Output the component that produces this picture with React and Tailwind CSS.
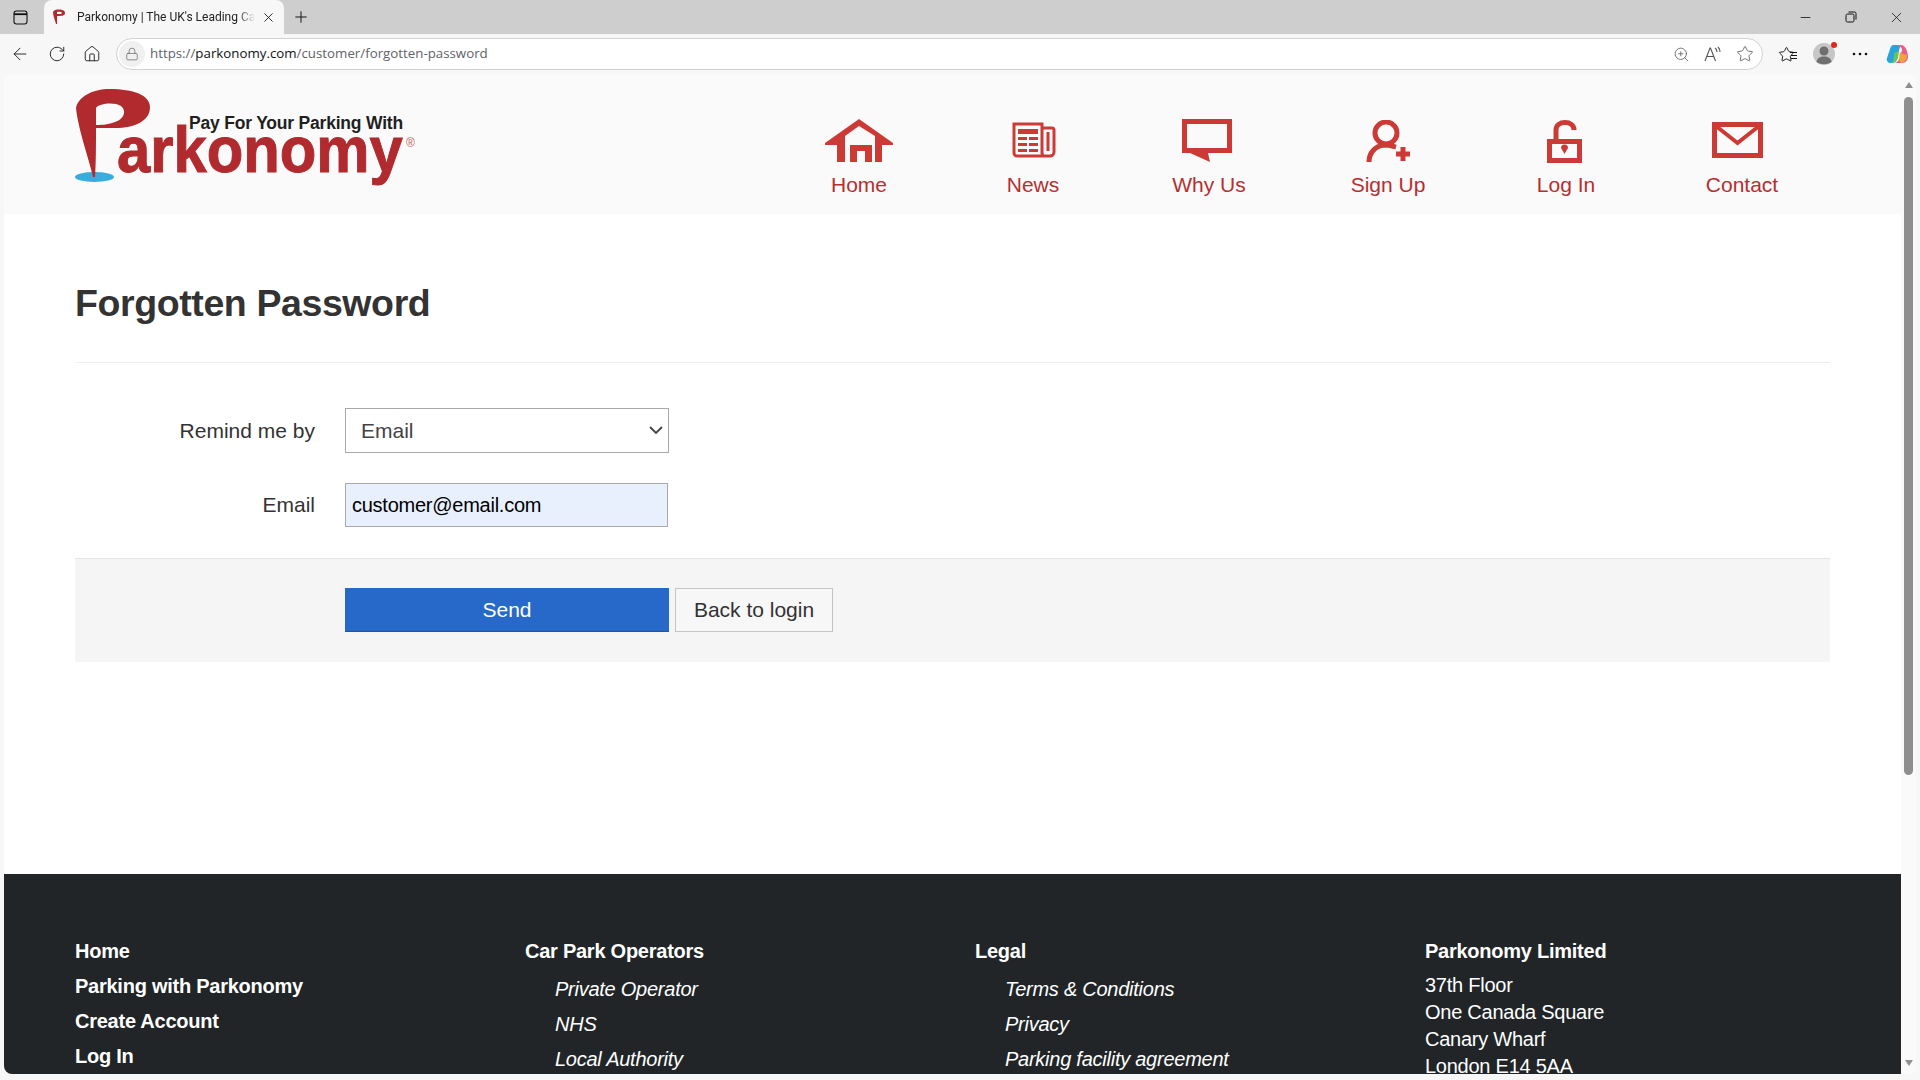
import React from "react";
import { ArrowLeft, RotateCw, House, Lock, ZoomIn, Star, X, Plus, Minus } from "lucide-react";

const nav = [
  { label: "Home", w: "w-[174px]", shift: "", Icon: HomeIcon },
  { label: "News", w: "w-[174px]", shift: "pl-[2px] pb-[2px]", Icon: NewsIcon },
  { label: "Why Us", w: "w-[178px]", shift: "pr-[5px]", Icon: ChatIcon },
  { label: "Sign Up", w: "w-[180px]", shift: "", Icon: SignUpIcon },
  { label: "Log In", w: "w-[176px]", shift: "pr-[4px]", Icon: LockIcon },
  { label: "Contact", w: "w-[176px]", shift: "pr-[9px] pb-[2px]", Icon: MailIcon },
];

function HomeIcon() {
  return (
    <svg width="68" height="44" viewBox="0 0 68 44" fill="#cc3a36" fillRule="evenodd">
      <path d="M34 0L68 24V26H57V43H12V26H0V24ZM34 7L20 17V43H25V26H47V43H50V17ZM32 32H40V43H32Z" />
    </svg>
  );
}

function NewsIcon() {
  return (
    <svg width="44" height="36" viewBox="0 0 44 36" fill="none" stroke="#cc3a36" strokeWidth="3">
      <path d="M2 2H30V31a3 3 0 0 0 3 3H5a3 3 0 0 1-3-3Z" />
      <path d="M30 6H40a2 2 0 0 1 2 2V30a4 4 0 0 1-4 4H33" />
      <path d="M36 10V29" />
      <g fill="#cc3a36" stroke="none">
        <rect x="6" y="7" width="20" height="5" />
        <rect x="6" y="15" width="9" height="3" />
        <rect x="17" y="15" width="9" height="3" />
        <rect x="6" y="21" width="9" height="3" />
        <rect x="17" y="21" width="9" height="3" />
        <rect x="6" y="27" width="9" height="3" />
        <rect x="17" y="27" width="9" height="3" />
      </g>
    </svg>
  );
}

function ChatIcon() {
  return (
    <svg width="50" height="44" viewBox="0 0 50 44" fill="#cc3a36" fillRule="evenodd">
      <path d="M0 0H50V34H26L28 43L8 34H0ZM5 5V29H45V5Z" />
    </svg>
  );
}

function SignUpIcon() {
  return (
    <svg width="44" height="42" viewBox="0 0 44 42" fill="none" stroke="#cc3a36" strokeWidth="5">
      <circle cx="20" cy="13" r="11" />
      <path d="M3 42C3 33 9 26 18 25C23 25 26 26 30 27" />
      <path d="M37 27V41M30 34H44" />
    </svg>
  );
}

function LockIcon() {
  return (
    <svg width="35" height="43" viewBox="0 0 35 43" fill="none" stroke="#cc3a36" strokeWidth="5">
      <rect x="2.5" y="21.5" width="30" height="19" />
      <path d="M9 20V10C9 5 13 2.5 18 2.5C23 2.5 27 5 27 10" />
      <path d="M14 28a3.5 3.5 0 1 1 7 0L17.5 34Z" fill="#cc3a36" stroke="none" />
    </svg>
  );
}

function MailIcon() {
  return (
    <svg width="51" height="36" viewBox="0 0 51 36" fill="none" stroke="#cc3a36" strokeWidth="5">
      <rect x="2.5" y="2.5" width="46" height="31" />
      <path d="M4 4L25.5 21L47 4" strokeWidth="4" />
    </svg>
  );
}

function Logo() {
  return (
    <div className="relative w-[340px] h-[96px] font-['Liberation_Sans',sans-serif]">
      <svg className="absolute left-0 top-0" width="90" height="96" viewBox="0 0 90 96">
        <ellipse cx="19.500" cy="88" rx="19.500" ry="5" fill="#3aabdf" />
        <path
          fill="#b02a2e"
          fillRule="evenodd"
          d="M1 19C3 8 17 0 35 0C58 0 75 6 75 18C75 32 60 39 40 39H21C21 55 21 75 20 88H18C14 70 3 40 1 19ZM21 19C24 14 40 13 46 17C52 22 49 30 40 33C32 36 25 36 21 36Z"
        />
      </svg>
      <span className="absolute left-[42px] top-[23px] text-[65px] leading-[75px] font-bold text-[#b02a2e] origin-left scale-x-[0.92] [-webkit-text-stroke:1px_#b02a2e] whitespace-nowrap">
        arkonomy
      </span>
      <span className="absolute left-[114px] top-[24px] text-[17.5px] leading-[20px] font-bold text-[#1f1f1f] tracking-[-0.2px] whitespace-nowrap">
        Pay For Your Parking With
      </span>
      <span className="absolute left-[331px] top-[48px] text-[12px] leading-[12px] text-[#c9605f]">®</span>
    </div>
  );
}

function FooterHeading({ children, className = "" }) {
  return <div className={`h-[35px] leading-[35px] font-bold ${className}`}>{children}</div>;
}

function FooterSub({ children }) {
  return <div className="h-[35px] leading-[35px] pl-[30px] italic">{children}</div>;
}

export default function App() {
  return (
    <div className="h-screen w-full overflow-hidden flex flex-col bg-[#f7f7f7] font-['Liberation_Sans',sans-serif]">
      {/* tab strip */}
      <div className="h-[34px] shrink-0 flex items-center bg-[#cecece] text-[#1a1a1a]">
        <div className="w-[40px] flex justify-center">
          <svg width="15" height="15" viewBox="0 0 15 15" fill="none" stroke="#111" strokeWidth="1.1">
            <rect x="1" y="1" width="13" height="13" rx="2.5" />
            <path d="M1 4.200H14" strokeWidth="1.800" />
          </svg>
        </div>
        <div className="ml-[4px] w-[240px] h-full flex items-center bg-[#f7f7f7] rounded-t-lg pl-[8px] pr-[8px]">
          <svg width="14" height="16" viewBox="0 0 14 16">
            <path fill="#b02a2e" fillRule="evenodd" d="M1 3C2 1 4 .5 7 .5C11 .5 13 2 13 4C13 7 9 7 5 7C5 10 5 12 5 15H4C3 11 1 7 1 3ZM5 3V5C8 5 10 5 10 4C10 3 7 2.500 5 3Z" />
          </svg>
          <span className="ml-[11px] w-[178px] overflow-hidden whitespace-nowrap text-[12px] font-['Roboto',sans-serif] text-[#222] [mask-image:linear-gradient(to_right,black_90%,transparent)]">
            Parkonomy | The UK's Leading Car Park
          </span>
          <X size={15} strokeWidth={1.5} className="ml-auto text-[#222]" />
        </div>
        <Plus size={18} strokeWidth={1.3} className="ml-[8px] text-[#111]" />
        <div className="ml-auto flex items-center text-[#111]">
          <Minus size={15} strokeWidth={1.3} className="mr-[32px]" />
          <svg className="mr-[31px]" width="12" height="12" viewBox="0 0 12 12" fill="none" stroke="#111" strokeWidth="1">
            <rect x="1" y="3" width="8" height="8" rx="1.5" />
            <path d="M3.500 1H9.500A1.500 1.500 0 0 1 11 2.500V8.500" />
          </svg>
          <X size={17} strokeWidth={1.1} className="mr-[15px]" />
        </div>
      </div>

      {/* toolbar */}
      <div className="h-[40px] shrink-0 flex items-center text-[#1a1a1a]">
        <div className="w-[116px] flex items-center pl-[10px] gap-[17.5px]">
          <ArrowLeft size={20} strokeWidth={1.1} />
          <RotateCw size={18} strokeWidth={1.2} />
          <House size={18} strokeWidth={1.2} />
        </div>
        <div className="w-[1647px] h-[32px] flex items-center bg-white rounded-full border border-[#d2d2d2]">
          <div className="w-[26px] h-[26px] ml-[2px] rounded-full bg-[#f0f0f0] flex items-center justify-center">
            <Lock size={14} strokeWidth={1.1} className="text-[#555]" />
          </div>
          <div className="ml-[5px] text-[13.3px] font-['Open_Sans',sans-serif] text-[#5f6368] whitespace-nowrap">
            https://<span className="text-[#111]">parkonomy.com</span>/customer/forgotten-password
          </div>
          <div className="ml-auto flex items-center text-[#555] pr-[8px] gap-[14px]">
            <ZoomIn size={17} strokeWidth={1.1} />
            <svg width="18" height="17" viewBox="0 0 18 17" fill="none" stroke="#555" strokeWidth="1.100">
              <path d="M1 15L6 2H6.500L11.500 15M3 10.500H9.500" />
              <path d="M11 2C12.500 3 13 4.500 13 6M14 1C15.500 2.500 16 4 16 6" />
            </svg>
            <Star size={18} strokeWidth={1.1} />
          </div>
        </div>
        <div className="flex-1 flex items-center pl-[15px] gap-[14px]">
          <div className="relative">
            <Star size={17} strokeWidth={1.3} className="text-[#111]" />
            <svg className="absolute left-[11px] top-[5px]" width="9" height="9" viewBox="0 0 9 9" stroke="#111">
              <path d="M1 1.500H8M2 4.500H8M2 7.500H8" />
            </svg>
          </div>
          <div className="relative ml-[4px] w-[22px] h-[22px] rounded-full bg-[#c6c6c6] overflow-visible flex items-center justify-center">
            <svg width="22" height="22" viewBox="0 0 22 22" fill="#6f6f6f">
              <circle cx="11" cy="8" r="4.500" />
              <path d="M3.500 19C4 15 7 13.500 11 13.500S18 15 18.500 19C14 22 8 22 3.500 19Z" />
            </svg>
            <span className="absolute right-[-2px] top-[-1px] w-[6px] h-[6px] rounded-full bg-[#e3241b]" />
          </div>
          <svg className="ml-[3px]" width="16" height="4" viewBox="0 0 16 4" fill="#111">
            <circle cx="2" cy="2" r="1.300" />
            <circle cx="8" cy="2" r="1.300" />
            <circle cx="14" cy="2" r="1.300" />
          </svg>
          <svg className="ml-[4px]" width="22" height="22" viewBox="0 0 22 22">
            <path d="M7 2H12C13 2 14 3 14 4L11 14C10 18 8 20 5 20H4C2 20 0 17 1 15L4 6C5 3 6 2 7 2Z" fill="#2aa3dc" />
            <path d="M11 2H15C18 2 20 5 21 8L22 13C22 17 20 20 16 20H9C12 19 13 17 14 14L16 7C16 5 14 3 11 2Z" fill="#e85f87" />
            <path d="M8 10L13 8L12 15C11 18 9 20 6 20C8 17 8 13 8 10Z" fill="#62c55f" />
            <path d="M14 9C16 11 19 12 21 12C21 16 19 19 15 20C13 18 13 13 14 9Z" fill="#f3a33c" />
          </svg>
        </div>
      </div>

      {/* page */}
      <div className="flex-1 min-h-0 flex ml-[4px] mr-[4px] mb-[6px] rounded-lg overflow-hidden bg-white">
        <div className="flex-1 min-w-0 overflow-hidden">
          <header className="h-[140px] bg-[#fafafa] flex justify-between pl-[71px] pr-[71px] pt-[15px]">
            <Logo />
            <nav className="flex">
              {nav.map(({ label, w, shift, Icon }) => (
                <a key={label} className={`${w} flex flex-col items-center text-[21px] text-[#b52f2f]`}>
                  <div className={`h-[44px] mt-[30px] flex items-center justify-center ${shift}`}>
                    <Icon />
                  </div>
                  <span className="mt-[10px] leading-[24px]">{label}</span>
                </a>
              ))}
            </nav>
          </header>

          <main className="pl-[71px] pr-[71px] text-[#333] text-[21px]">
            <div className="border-b border-[#eeeeee] pt-[67px] pb-[36px]">
              <h1 className="text-[37.500px] leading-[45px] font-bold tracking-[-0.4px]">Forgotten Password</h1>
            </div>
            <form>
              <div className="pt-[45px] flex items-center">
                <label className="w-[240px] text-right">Remind me by</label>
                <div className="relative ml-[30px]">
                  <select className="w-[324px] h-[45px] pl-[15px] border border-[#a9a9a9] bg-white appearance-none text-[#444]">
                    <option>Email</option>
                  </select>
                  <svg className="absolute right-[6px] top-[18px]" width="14" height="9" viewBox="0 0 14 9" fill="none" stroke="#444" strokeWidth="1.800">
                    <path d="M1 1L7 7L13 1" />
                  </svg>
                </div>
              </div>
              <div className="pt-[30px] flex items-center">
                <label className="w-[240px] text-right">Email</label>
                <input
                  readOnly
                  value="customer@email.com"
                  className="ml-[30px] w-[323px] h-[44px] px-[6px] border border-[#a9a9a9] bg-[#e8f0fe] text-black text-[20px] tracking-[-0.25px]"
                />
              </div>
              <div className="mt-[31px] border-t border-[#e5e5e5] bg-[#f5f5f5] pt-[29px] pb-[30px] pl-[270px] flex gap-[6px]">
                <button type="button" className="w-[324px] h-[44px] bg-[#2769c9] text-white border-b border-[#1d55a8]">
                  Send
                </button>
                <button type="button" className="w-[158px] h-[44px] bg-[#f7f7f7] border border-[#c4c4c4] text-[#333]">
                  Back to login
                </button>
              </div>
            </form>
          </main>

          <footer className="mt-[212px] bg-[#212527] text-white text-[20px] tracking-[-0.25px] pl-[71px] pt-[60px] pb-[40px] grid grid-cols-[450px_450px_450px_450px]">
            <div>
              <FooterHeading>Home</FooterHeading>
              <FooterHeading>Parking with Parkonomy</FooterHeading>
              <FooterHeading>Create Account</FooterHeading>
              <FooterHeading>Log In</FooterHeading>
            </div>
            <div>
              <FooterHeading className="mb-[3px]">Car Park Operators</FooterHeading>
              <FooterSub>Private Operator</FooterSub>
              <FooterSub>NHS</FooterSub>
              <FooterSub>Local Authority</FooterSub>
            </div>
            <div>
              <FooterHeading className="mb-[3px]">Legal</FooterHeading>
              <FooterSub>Terms &amp; Conditions</FooterSub>
              <FooterSub>Privacy</FooterSub>
              <FooterSub>Parking facility agreement</FooterSub>
            </div>
            <div>
              <FooterHeading className="mb-[3px]">Parkonomy Limited</FooterHeading>
              <div className="leading-[27px]">
                <div>37th Floor</div>
                <div>One Canada Square</div>
                <div>Canary Wharf</div>
                <div>London E14 5AA</div>
              </div>
            </div>
          </footer>
        </div>

        {/* scrollbar */}
        <div className="w-[15px] shrink-0 bg-[#fafafa] flex flex-col items-center pt-[8px] pb-[8px]">
          <div className="w-0 h-0 border-x-[4.500px] border-x-transparent border-b-[6px] border-b-[#8f8f8f]" />
          <div className="w-[9px] h-[678px] mt-[9px] rounded-full bg-[#8f8f8f]" />
          <div className="mt-auto w-0 h-0 border-x-[4.500px] border-x-transparent border-t-[6px] border-t-[#8f8f8f]" />
        </div>
      </div>
    </div>
  );
}
